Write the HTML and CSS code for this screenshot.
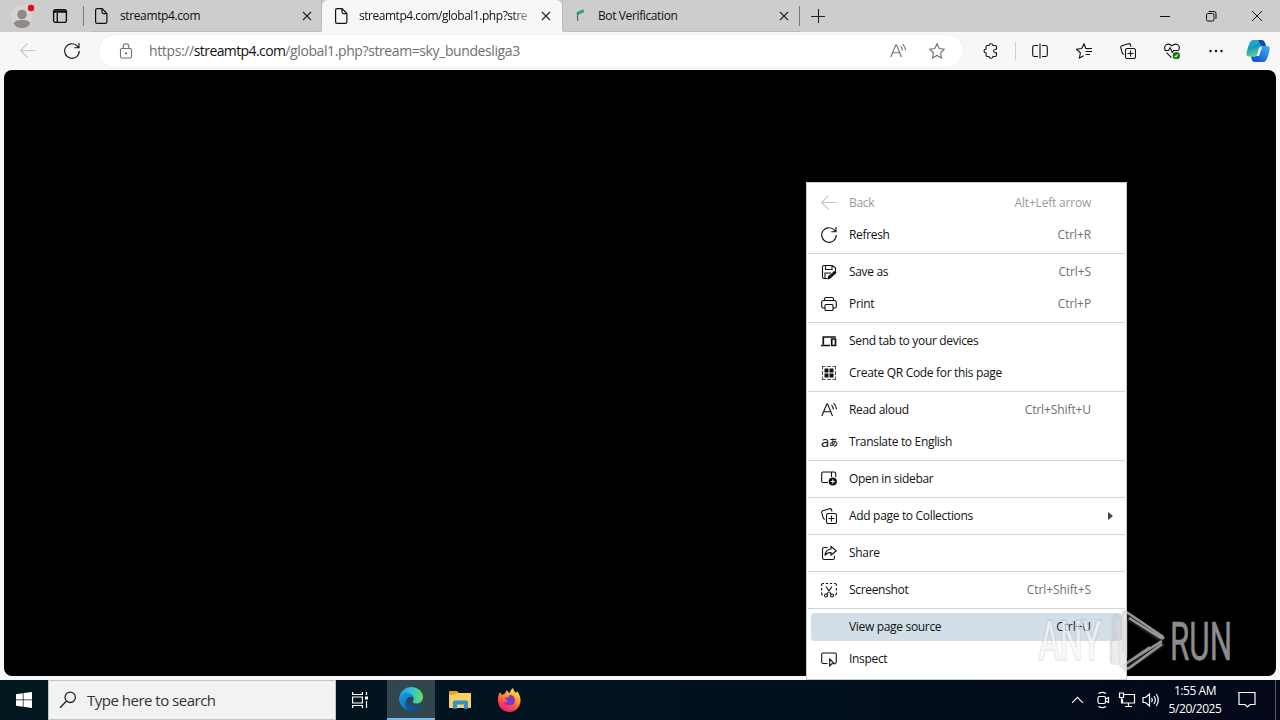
FILE: index.html
```html
<!DOCTYPE html>
<html lang="en">
<head>
<meta charset="utf-8">
<title>streamtp4.com</title>
<link rel="stylesheet" href="styles.css">
</head>
<body>
<div class="screen">
  <header class="tabstrip">
    <svg class="profile" viewBox="0 0 28 28"><circle cx="12" cy="14" r="11" fill="#d6d3d1"/><circle cx="12" cy="12.500" r="4.800" fill="#8d8a87"/><path d="M4 22c0-3 3-4 8-4s8 1 8 4c-2 3-5 4-8 4s-6-1-8-4z" fill="#8d8a87"/><circle cx="21" cy="6" r="3.2" fill="#e00b1c"/></svg>
    <svg class="ic workspace" viewBox="0 0 16 16"><rect x="1.6" y="1.6" width="12.8" height="12.8" rx="2.2"/><path d="M1.6 3h12.8M1.6 4h12.8M5.3 5v9.4"/></svg>
    <div class="tab first">
      <svg class="ic" viewBox="0 0 16 16"><path d="M2.6 2.2Q2.6.7 4.1.7h5l4.8 4.8v8.2q0 1.6-1.5 1.6H4.1q-1.5 0-1.5-1.6zM9 .8v3.3q0 1.5 1.5 1.5h3.3"/></svg>
      <span class="title">streamtp4.com</span>
      <svg class="x" viewBox="0 0 10 10"><path d="M1 1l8 8M9 1L1 9"/></svg>
    </div>
    <div class="tab active">
      <svg class="ic" viewBox="0 0 16 16"><path d="M2.6 2.2Q2.6.7 4.1.7h5l4.8 4.8v8.2q0 1.6-1.5 1.6H4.1q-1.5 0-1.5-1.6zM9 .8v3.3q0 1.5 1.5 1.5h3.3"/></svg>
      <span class="title">streamtp4.com/global1.php?stre</span>
      <svg class="x" viewBox="0 0 10 10"><path d="M1 1l8 8M9 1L1 9"/></svg>
    </div>
    <div class="tab last">
      <svg class="ic favicon" viewBox="0 0 16 16"><path d="M3 5.500Q5 2 11 1.500L10.500 5 8 5.500 5 7z" fill="#2faa6a" stroke="none"/><path d="M5 5q-1 4-.3 8" stroke="#367c58"/></svg>
      <span class="title">Bot Verification</span>
      <svg class="x" viewBox="0 0 10 10"><path d="M1 1l8 8M9 1L1 9"/></svg>
    </div>
    <svg class="newtab" viewBox="0 0 14 14"><path d="M0 7.500h14M7.500 0v14"/></svg>
    <div class="winbtns">
      <svg viewBox="0 0 12 12"><path d="M1 6.500h10"/></svg>
      <svg viewBox="0 0 12 12"><rect x="1.500" y="3.500" width="7.500" height="7.500" rx="1.300"/><path d="M3.500 1.500h5.500q2 0 2 2v5.500"/></svg>
      <svg viewBox="0 0 12 12"><path d="M1 1l10 10M11 1L1 11"/></svg>
    </div>
  </header>

  <div class="toolbar">
    <svg class="ic back" viewBox="0 0 16 16"><path d="M15.500 7.500H.7M7.500.5L.6 7.500l6.900 7"/></svg>
    <svg class="ic reload" viewBox="0 0 16 16"><path d="M15.300 8A7.300 7.300 0 1 1 13.500 3.200L14.600 4.600M15 0v4.800h-4.700"/></svg>
    <div class="address">
      <svg class="ic lock" viewBox="0 0 16 16"><rect x="2.500" y="5.500" width="11" height="9.500" rx="1.500"/><path d="M5.200 5.500V3.600a2.800 2.800 0 0 1 5.600 0v1.900"/><circle cx="8" cy="10.300" r=".6" fill="currentColor"/></svg>
      <span class="url"><span>https://</span><span class="host">streamtp4.com</span><span class="path">/global1.php?stream=sky_bundesliga3</span></span>
      <svg class="ic aloud" viewBox="0 0 16 16"><path d="M.8 14L5.800 2h.8l4.900 12M2.400 9.800h7.500M10.500 3.200q1.700 1.600 1.800 4.200M12.500 1.100q2.800 2.300 3 6"/></svg>
      <svg class="ic star" viewBox="0 0 16 16"><path d="M8 .8l2.200 4.700 5.100.7-3.700 3.600.9 5.200L8 12.500 3.500 15l.9-5.200L.7 6.200l5.100-.7z"/></svg>
    </div>
    <div class="tools">
      <svg class="ic" viewBox="0 0 16 16"><path d="M4.500 2.500H6Q6.200.7 8 .7t2 1.800h2q1.500 0 1.500 1.500v2.300h-1.200Q10.700 6.500 10.700 8t1.600 1.700h1.200V12q0 1.500-1.500 1.500h-2Q9.800 15.300 8 15.300t-2-1.800H4.500Q3 13.500 3 12V9.800Q1 9.800 1 8t2-1.800V4q0-1.500 1.500-1.500z"/></svg>
      <i class="sep"></i>
      <svg class="ic split" viewBox="0 0 16 16"><path d="M6 2.500H2.500Q.7 2.500.7 4.300v7.400q0 1.800 1.800 1.800H6M10 2.500h3.500q1.800 0 1.800 1.800v7.400q0 1.800-1.800 1.800H10M8 .5v15"/></svg>
      <svg class="ic" viewBox="0 0 16 16"><path d="M12.500 5.700l-2.700-.3L8 .8 5.700 5.500.7 6.300l3.700 3.500-1 5.200 4.300-2.300M10 5.500h6M9.500 8.500h6.500M9.500 11.500h4.500"/></svg>
      <svg class="ic" viewBox="0 0 16 16"><path d="M3.800 11.500L2.400 10.500.8 4.800q-.3-1.500 1-2L8.500.7q1.500-.3 2 1l.5 2"/><rect x="5.500" y="5.500" width="10" height="10" rx="1.800"/><path d="M10.500 7.500v6M7.500 10.500h6"/></svg>
      <svg class="ic health" viewBox="0 0 16 16"><path d="M1.300 7Q-.5 3.500 2.400 1.600 5.500.2 8 3q2.500-2.800 5.600-1.400Q16.500 3.500 14.700 7M.5 7.500h4l1.500-2.700L8.300 9.500l1.400-2h5M2.500 9.700l5 5"/><circle cx="12.400" cy="12.700" r="3.700" fill="#147a14" stroke="none"/><path d="M10.900 12.800l1 1 2-2.300" stroke="#fff"/></svg>
      <svg class="ic" viewBox="0 0 16 16"><g fill="#111" stroke="none"><circle cx="2.500" cy="8" r="1.200"/><circle cx="8" cy="8" r="1.200"/><circle cx="13.500" cy="8" r="1.200"/></g></svg>
    </div>
    <svg class="copilot" viewBox="0 0 24 24">
      <defs>
        <linearGradient id="ca" x1="0" y1="0" x2=".4" y2="1"><stop offset="0" stop-color="#23b8dd"/><stop offset=".5" stop-color="#1599c8"/><stop offset="1" stop-color="#65d779"/></linearGradient>
        <linearGradient id="cb" x1="1" y1="0" x2=".3" y2="1"><stop offset="0" stop-color="#3fb2f2"/><stop offset="1" stop-color="#1256cf"/></linearGradient>
      </defs>
      <path d="M7 1h8q3 0 4 3l1 3h-4q-2 0-3 3l-1.500 5q-1 2.500-3.500 2.500H3q-3 0-2.500-3.500Q2 7 4 3q1-2 3-2z" fill="url(#ca)"/>
      <path d="M12 1h3q3 0 4 3l1 3h-4q-2-1-2.500-3.500Q13 1.500 12 1z" fill="#1649a4"/>
      <path d="M17 7h4q3 0 2.700 3.500-.7 5-3.200 10-1 2.500-3.500 2.500H9q-2.500 0-3.300-2.500L5 17.500h3.500q2 0 3-2.500l1.200-4.500H16L14.500 16h-2l2.500-7q.5-2 2-2z" fill="url(#cb)"/>
      <path d="M13 8.500h3L13 17h-3q1-.5 1.500-2z" fill="#f4fbff"/>
    </svg>
  </div>

  <main class="page"></main>

  <footer class="taskbar">
    <div class="start"><svg viewBox="0 0 16 16"><path d="M0 2.200L6.800 1.200v6.300H0zM7.500 1.100L16 0v7.500H7.500zM0 8.300h6.800v6.400L0 13.800zM7.500 8.300H16V16l-8.500-1.200z"/></svg></div>
    <div class="search"><svg viewBox="0 0 18 18"><circle cx="11.200" cy="6.300" r="5.200"/><path d="M7.500 10L1 16.700"/></svg><span>Type here to search</span></div>
    <div class="app"><svg class="line taskview" viewBox="0 0 16 16"><path d="M.6 0v2.500h9.800V0M.6 16v-2.500h9.800V16M.6 5h9.800v6H.6zM14.500 0v3M14.500 9v7"/><path d="M13 4.500h3v3h-3z" fill="#fff" stroke="none"/></svg></div>
    <div class="app on">
      <svg class="edge" viewBox="0 0 24 24">
        <defs>
          <linearGradient id="ea" x1="0" y1=".5" x2="1" y2=".5"><stop offset="0" stop-color="#1d9fdb"/><stop offset=".5" stop-color="#2bc3d2"/><stop offset="1" stop-color="#65e05c"/></linearGradient>
          <linearGradient id="eb" x1="0" y1="0" x2="1" y2="1"><stop offset="0" stop-color="#1a9be0"/><stop offset="1" stop-color="#0d62b4"/></linearGradient>
        </defs>
        <path d="M.2 11A12 12 0 0 1 12 0c7 0 12 4.800 12 10 0 4-3 6.500-6.500 6.500-3 0-4.500-1.300-3.200-3 1.200-2-.3-4.800-3.300-4.800C6 8.700 2 9 .2 11z" fill="url(#ea)"/>
        <path d="M0 12C.3 7.500 4 5.800 7.500 5.800c4.500 0 7.600 3 7.200 6.200-2-4-7-2-7 2.500 0 5 5 8.800 9 8.200A12 12 0 0 1 0 12z" fill="url(#eb)"/>
        <path d="M9.300 10.300c-2.500 5.500 1.700 9 7 9 2.500 0 4.500-.8 6-2.200C20.300 22 16.300 24 12.500 24 5.500 23.500 4.500 14 9.300 10.300z" fill="#114f98"/>
      </svg>
    </div>
    <div class="app"><svg class="folder" viewBox="0 0 22 20"><path d="M0 2q0-1 1-1h7l2 2h11q1 0 1 1v13q0 1-1 1H1q-1 0-1-1z" fill="#e9a51d"/><path d="M0 5h3l7-2h11q1 0 1 1v13q0 1-1 1H1q-1 0-1-1z" fill="#f8d068"/><path d="M4 18v-6q0-1.500 1.500-1.500h12q1.500 0 1.500 1.500v6h-4v-3.500H8V18z" fill="#368fcf"/><path d="M4 18v1h4v-1zM15 18v1h4v-1z" fill="#2477b5"/></svg></div>
    <div class="app"><svg class="fox" viewBox="0 0 24 24">
      <defs><linearGradient id="fa" x1=".8" y1="0" x2=".3" y2="1"><stop offset="0" stop-color="#fff04a"/><stop offset=".4" stop-color="#ff9a2a"/><stop offset=".75" stop-color="#ff3f50"/><stop offset="1" stop-color="#e51a78"/></linearGradient></defs>
      <path d="M3 4l2 3q1-1 3-1.500Q8.500 3.500 10 2q.5 2 2.500 3Q14 1 16 0q.5 3 3 5l1-2q4 5 3.500 11A11.300 11.300 0 0 1 1 13.500Q.5 8 3 4z" fill="url(#fa)"/>
      <path d="M12.500 7Q18 7 18 12.500 17.500 17.500 12 17.500 8 17 6.800 14q2.500 1 4.200-.8Q8.500 12.500 8 9.500q2 .3 3.500-.5z" fill="#7b38c9"/>
    </svg></div>
    <div class="tray">
      <svg class="line chev" viewBox="0 0 14 8"><path d="M1.200 7L7 1.200 12.800 7"/></svg>
      <svg class="line cam" viewBox="0 0 16 18"><rect x="3" y="5.500" width="7.500" height="7" rx="1.500"/><path d="M10.500 8l3-1.500v5l-3-1.500M3.500 2.500q4-2.300 7.500 0M3.500 15.500q4 2.300 7.500 0"/></svg>
      <svg class="line net" viewBox="0 0 18 16"><path d="M6 2.500h10.500v8.500H4.500V7M7 14.500h7M10.500 11v3.500M1.500 1h4v4.500h-4zM3.500 5.500v5.500h1"/></svg>
      <svg class="line vol" viewBox="0 0 18 16"><path d="M1 5.500h2.500l4-3.500v12l-4-3.500H1zM9.500 5.800q1.500 2.200 0 4.400M12 4q2.700 4 0 8M14.300 2q4 6 0 12"/></svg>
      <div class="clock"><span>1:55 AM</span><span class="date">5/20/2025</span></div>
      <svg class="line note" viewBox="0 0 18 18"><path d="M1 1.500h16v12h-5L9.500 16 7 13.500H1z"/></svg>
      <i class="peek"></i>
    </div>
  </footer>

  <div class="menu">
    <div class="item off"><svg class="ic" viewBox="0 0 16 16"><path d="M15.800 7.500H.7M7.500.7L.6 7.500l6.900 6.800"/></svg><span>Back</span><kbd>Alt+Left arrow</kbd></div>
    <div class="item"><svg class="ic" viewBox="0 0 16 16"><path d="M15.300 8A7.300 7.300 0 1 1 13.500 3.200L14.600 4.600M15 0v4.800h-4.700"/></svg><span>Refresh</span><kbd>Ctrl+R</kbd></div>
    <hr>
    <div class="item"><svg class="ic" viewBox="0 0 16 16"><path d="M6 14.500H3q-1.500 0-1.500-1.500V3Q1.500 1.500 3 1.500h8.500L14.500 4v3M4.500 1.500v4h6.500v-4M4 14V9h6"/><path d="M7 12.500L13 7.200q1.200-.7 2 .2.800 1-.1 2L9 14.700l-2.700.8z" fill="#111" stroke="none"/></svg><span>Save as</span><kbd>Ctrl+S</kbd></div>
    <div class="item"><svg class="ic" viewBox="0 0 16 16"><path d="M4 12H2.200Q.7 12 .7 10.500V6.500q0-2 2-2h10.600q2 0 2 2v4q0 1.500-1.500 1.500H12M3.500 4.500V3q0-1.500 1.500-1.500h6q1.500 0 1.500 1.500v1.500"/><rect x="4" y="8.500" width="8" height="6" rx="1"/></svg><span>Print</span><kbd>Ctrl+P</kbd></div>
    <hr>
    <div class="item"><svg class="ic thick" viewBox="0 0 16 16"><path d="M2.300 11.500V4h12.500M0 12.500h9M10.700 6h3.800v6.500h-3.800z"/></svg><span>Send tab to your devices</span></div>
    <div class="item"><svg class="ic" viewBox="0 0 16 16"><path d="M4.500 1.500h-3v3M11.500 1.500h3v3M1.500 11.500v3h3M14.500 11.500v3h-3M1.500 6v4M14.500 6v4M6 1.500h4M6 14.500h4" stroke="#555"/><path d="M3.500 3.500h4v4h-4zM8.500 3.500h4v4h-4zM3.500 8.500h4v4h-4zM8.500 8.500h4v4h-4z" fill="#111" stroke="none"/></svg><span>Create QR Code for this page</span></div>
    <hr>
    <div class="item"><svg class="ic" viewBox="0 0 16 16"><path d="M.8 14L5.800 2h.8l4.900 12M2.400 9.800h7.500M10.500 3.200q1.700 1.600 1.800 4.200M12.500 1.100q2.800 2.300 3 6"/></svg><span>Read aloud</span><kbd>Ctrl+Shift+U</kbd></div>
    <div class="item"><span class="lang"><b>a</b><em>あ</em></span><span>Translate to English</span></div>
    <hr>
    <div class="item"><svg class="ic" viewBox="0 0 16 16"><path d="M7 11.500H2.200q-1.500 0-1.500-1.500V2.500Q.7 1 2.200 1h11q1.500 0 1.500 1.500V6M10.500 1v5"/><circle cx="11.800" cy="10.500" r="4.100" fill="#111" stroke="none"/><path d="M11.800 8.500v4M9.800 10.500h4" stroke="#fff"/></svg><span>Open in sidebar</span></div>
    <hr>
    <div class="item"><svg class="ic" viewBox="0 0 16 16"><path d="M3.800 11.500L2.400 10.500.8 4.800q-.3-1.500 1-2L8.500.7q1.500-.3 2 1l.5 2"/><rect x="5.500" y="5.500" width="10" height="10" rx="1.800"/><path d="M10.500 7.500v6M7.500 10.500h6"/></svg><span>Add page to Collections</span><svg class="arrow" viewBox="0 0 5 8"><path d="M0 0l5 4-5 4z"/></svg></div>
    <hr>
    <div class="item"><svg class="ic" viewBox="0 0 16 16"><path d="M6.500 2.500H3.300q-1.800 0-1.800 1.800v8.400q0 1.800 1.800 1.800h8.400q1.800 0 1.800-1.800V11M10 1.500l5.300 4.300L10 10V7.500Q6 7.300 4 10.500 4.500 4.500 10 4z"/></svg><span>Share</span></div>
    <hr>
    <div class="item"><svg class="ic" viewBox="0 0 16 16"><path d="M3 1.500H2Q.6 1.500.6 3v1M5 1.500h2.200M9 1.500h2.200M13 1.500h1q1.400 0 1.400 1.500v1M.6 6v2.500M15.400 6v2.500M.6 10.500v1Q.6 13 2 13M15.400 10.500v1Q15.400 13 14 13M5 4.500l5.300 8M11 4.500l-5.300 8"/><circle cx="5" cy="13.500" r="1.500"/><circle cx="11" cy="13.500" r="1.500"/></svg><span>Screenshot</span><kbd>Ctrl+Shift+S</kbd></div>
    <hr>
    <div class="item hot"><i class="ic"></i><span>View page source</span><kbd>Ctrl+U</kbd></div>
    <div class="item"><svg class="ic" viewBox="0 0 16 16"><path d="M6.500 12.500H2.300Q.7 12.500.7 11V3.500Q.7 2 2.300 2h11.400q1.600 0 1.600 1.500V11q0 1.500-1.300 1.500M8.700 8v7l2-2.200h2.800z"/></svg><span>Inspect</span></div>
  </div>

  <svg class="watermark" viewBox="0 0 210 70">
    <text class="any" x="9" y="51" textLength="62" lengthAdjust="spacingAndGlyphs">ANY</text>
    <path class="markhalo" d="M84 57V13q0-5 5-5M93 8v52M93 5l40 27M93 62l40-27"/>
    <path class="mark" d="M81 55V15q0-6 5-4v12M89 57V18M93 45V5q1-3 5 0l34 23q3 3-1 2L99 10M96 50V12M132 36L99 60q-5 2-5-3l26-18M100 53l32-20"/>
    <text class="run" x="140" y="51.500" textLength="62" lengthAdjust="spacingAndGlyphs">RUN</text>
  </svg>
</div>
</body>
</html>
```
FILE: styles.css
```css
* { box-sizing: border-box; }
body { margin: 0; font-family: "Open Sans", "Noto Sans", sans-serif; font-size: 12px; color: #111; }
svg { display: block; flex: none; }
.screen { position: relative; width: 1280px; height: 720px; overflow: hidden; display: flex; flex-direction: column; background: #f7f7f7; }
.ic { width: 16px; height: 16px; flex: none; fill: none; stroke: currentColor; stroke-width: 1.1; }

.tabstrip { height: 32px; flex: none; display: flex; align-items: center; background: #cdcdcd; }
.profile { width: 28px; height: 28px; margin-left: 10px; }
.workspace { margin: 0 23px 0 14px; stroke-width: 1.4; }
.tab { display: flex; align-items: center; height: 32px; flex: none; border-bottom: 1px solid #bdbdbd; }
.tab.first { width: 231px; padding: 0 9px 0 2px; border-radius: 0 0 5px 0; border-right: 1px solid #bbb; }
.tab.first::before { content: ""; width: 1px; height: 20px; background: #777; margin: 0 9px 0 -10px; }
.tab.active { width: 240px; padding: 0 11px; background: #f7f7f7; border: 0; border-radius: 6px 6px 0 0; }
.tab.last { width: 238px; padding: 0 10px; border-left: 1px solid #bbb; border-radius: 0 0 0 5px; }
.tab.last::after { content: ""; width: 1px; height: 20px; background: #777; margin: 0 -10px 0 10px; }
.tab .ic { stroke-width: 1.2; }
.title { margin-left: 11px; flex: 1; white-space: nowrap; line-height: 20px; letter-spacing: -.38px; color: #111; }
.active .title { margin: 0 10px 0 10px; letter-spacing: -.47px; -webkit-mask-image: linear-gradient(90deg, #000 89%, rgba(0,0,0,.25)); mask-image: linear-gradient(90deg, #000 89%, rgba(0,0,0,.25)); }
.last .title { margin-left: 9px; }
.x { width: 10px; height: 10px; fill: none; stroke: #222; stroke-width: 1.1; }
.newtab { width: 14px; height: 14px; margin-left: 11px; fill: none; stroke: #222; stroke-width: 1.1; }
.winbtns { margin-left: auto; display: flex; gap: 34px; padding-right: 17px; }
.winbtns svg { width: 12px; height: 12px; fill: none; stroke: #111; stroke-width: 1; }

.toolbar { height: 38px; flex: none; display: flex; align-items: center; background: #f7f7f7; }
.back { margin-left: 20px; color: #c9c9c9; }
.reload { margin-left: 28px; }
.address { width: 864px; height: 32px; margin-left: 19px; padding: 0 18px 0 19px; border-radius: 16px; background: #fff; display: flex; align-items: center; color: #707070; box-shadow: 0 0 1px #ddd; }
.url { margin-left: 15px; flex: 1; font-size: 14px; line-height: 20px; white-space: nowrap; letter-spacing: -.37px; }
.host { color: #111; letter-spacing: -.6px; }
.path { letter-spacing: -.4px; }
.star { margin-left: 23px; }
.tools { display: flex; align-items: center; margin-left: 20px; gap: 28px; }
.sep { width: 1px; height: 18px; background: #cfcfcf; margin: 0 -12px 0 -12px; }
.copilot { width: 24px; height: 24px; margin-left: 22px; }

.page { height: 606px; flex: none; margin: 0 4px 4px; border-radius: 8px; background: #000; }

.taskbar { height: 40px; flex: none; display: flex; background: linear-gradient(90deg, #02181f, #02131f 45%, #020d1c 75%, #04081a); color: #fff; }
.start { width: 48px; display: flex; align-items: center; justify-content: center; }
.start svg { width: 16px; height: 16px; fill: #fff; }
.search { width: 288px; display: flex; align-items: center; background: #f2f2f2; border: 1px solid #c4c4c4; color: #333; font-size: 15px; }
.search svg { width: 18px; height: 18px; margin: 0 10px 0 10px; fill: none; stroke: #222; stroke-width: 1.3; }
.search span { white-space: nowrap; letter-spacing: -.5px; }
.app { width: 49px; display: flex; align-items: center; justify-content: center; }
.app:nth-child(3) { width: 51px; padding-right: 3px; }
.app.on { width: 48px; background: #31464d; border-bottom: 2px solid #76b9ed; }
.line { fill: none; stroke: #fff; stroke-width: 1.2; }
.taskview { width: 16px; height: 16px; }
.edge, .fox { width: 24px; height: 24px; }
.folder { width: 22px; height: 20px; }
.tray { margin-left: auto; display: flex; align-items: center; }
.chev { width: 13px; height: 8px; margin-right: 11px; }
.cam { width: 16px; height: 18px; margin-right: 7px; }
.net { width: 18px; height: 16px; margin-right: 6px; }
.vol { width: 18px; height: 16px; margin-right: 8px; }
.clock { width: 54px; display: flex; flex-direction: column; align-items: center; line-height: 18px; letter-spacing: -.43px; white-space: nowrap; }
.date { letter-spacing: -.55px; letter-spacing: -.45px; }
.note { width: 18px; height: 18px; margin-left: 16px; }
.peek { width: 1px; height: 40px; background: #555d6e; margin: 0 4px 0 19px; }

.menu { position: absolute; left: 806px; top: 182px; width: 321px; height: 498px; padding: 4px 1px 0; background: #fff; border: 1px solid #ccc; display: flex; flex-direction: column; }
.item { height: 32px; flex: none; display: flex; align-items: center; padding: 0 34px 0 13px; line-height: 18px; white-space: nowrap; }
.item > span { margin-left: 12px; letter-spacing: -.32px; }
.item kbd { font: inherit; margin-left: auto; color: #707070; letter-spacing: -.1px; }
.item.off, .item.off kbd { color: #9a9a9a; }
.item.off kbd { letter-spacing: -.2px; }
.item.off .ic { color: #c4c4c4; }
.item.hot { height: 28px; margin: 2px 3px; padding: 0 31px 0 10px; border-radius: 4px; background: #d2dfe8; }
.item.hot kbd { color: #222; }
.thick { stroke-width: 1.7; }
.arrow { width: 5px; height: 8px; margin-left: auto; margin-right: -22px; fill: #444; }
.item > .lang { width: 16px; margin-left: 0; display: flex; align-items: center; letter-spacing: 0; }
.lang b { font-weight: 400; font-size: 15px; width: 8px; margin-top: -2px; }
.lang em { font: 500 9px "Noto Sans CJK JP", sans-serif; }
hr { width: 100%; height: 1px; flex: none; margin: 2px 0; border: 0; background: #d5d5d5; }

.watermark { position: absolute; left: 1030px; top: 608px; width: 210px; height: 70px; font-family: "Liberation Sans Narrow", Roboto, sans-serif; font-size: 53px; overflow: visible; }
.any { fill: #fff; fill-opacity: .65; stroke: #888; stroke-opacity: .17; stroke-width: 4; paint-order: stroke; }
.run { fill: #8c8c8c; stroke: #8c8c8c; stroke-width: .6; }
.markhalo { fill: none; stroke: #999; stroke-opacity: .18; stroke-width: 7; }
.mark { fill: none; stroke: #d8d8d8; stroke-opacity: .65; stroke-width: 2.600; }
```
